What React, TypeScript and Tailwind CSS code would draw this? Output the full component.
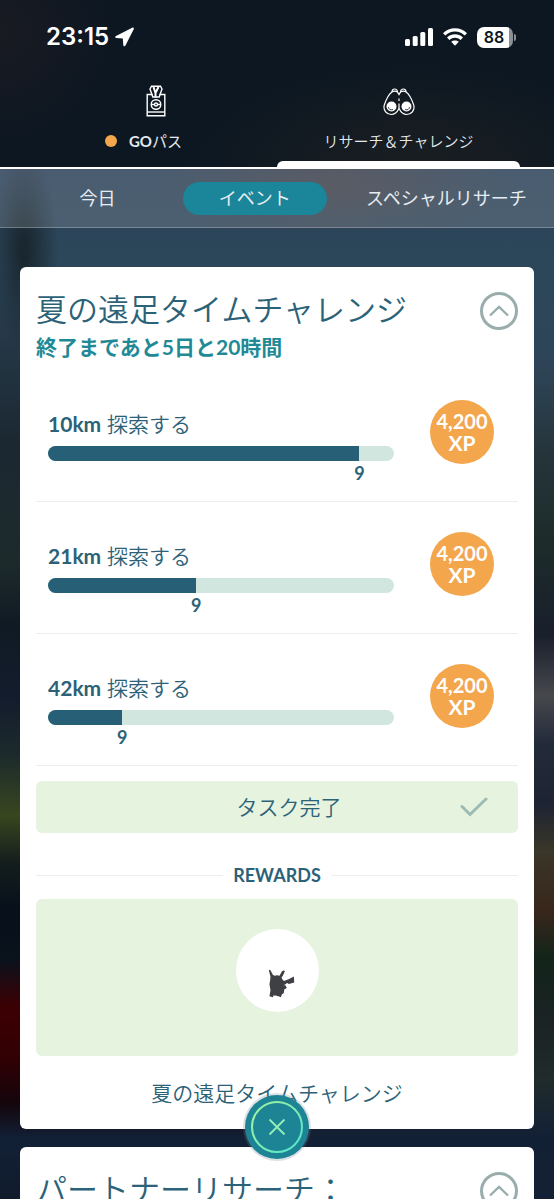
import React, { useState } from "react"

type TaskProps = {
     goal: number
     done: number
     xp: string
}

const tasks: Array<TaskProps> = [
     { goal: 10, done: 9, xp: "4,200" },
     { goal: 21, done: 9, xp: "4,200" },
     { goal: 42, done: 9, xp: "4,200" },
]

const StatusBar = () => (
     <div className="flex h-[74px] items-center justify-between pl-[46px] pr-[38px] text-white">
          <div className="flex items-center gap-1.5">
               <span className="font-['Inter',sans-serif] text-[24px] leading-7 font-semibold">23:15</span>
               <svg className="h-5 w-[19px]" viewBox="0 0 19 20" fill="currentColor" aria-hidden="true">
                    <path d="M17.2 0.8 1 8.9C-0.2 9.6 0 11 1.300 11.100L7.800 11.400 8.300 18C8.400 19.500 9.900 19.600 10.600 18.300L18.700 2.300C19.300 1 18.400 0.200 17.200 0.800Z" />
               </svg>
          </div>
          <div className="flex items-center gap-2.5">
               <svg className="h-[18px] w-7" viewBox="0 0 28 18" fill="currentColor" aria-hidden="true">
                    <rect x="0" y="11" width="5" height="7" rx="1.500" />
                    <rect x="7.700" y="8" width="5" height="10" rx="1.500" />
                    <rect x="15.300" y="4" width="5" height="14" rx="1.500" />
                    <rect x="23" y="0" width="5" height="18" rx="1.500" />
               </svg>
               <svg className="h-[18px] w-6" viewBox="0 0 24 18" aria-hidden="true">
                    <g fill="none" stroke="currentColor" strokeWidth="3.400">
                         <path d="M1.200 6.400C7.200 0.400 16.800 0.400 22.800 6.400" />
                         <path d="M5.200 10.800C9.100 7 14.900 7 18.800 10.800" />
                    </g>
                    <path fill="currentColor" d="M8.200 13.800C10.400 11.900 13.600 11.900 15.800 13.800L12 17.800Z" />
               </svg>
               <div className="flex items-center gap-px">
                    <span className="flex h-[21px] w-9 items-center justify-center rounded-[7px] bg-[linear-gradient(90deg,#fff_88%,#8b9096_88%)] pr-0.5 font-['Inter',sans-serif] text-[16px] font-semibold text-[#0c1722]">88</span>
                    <span className="h-[7px] w-0.5 rounded-r bg-[#8b9096]" />
               </div>
          </div>
     </div>
)

const PassIcon = () => (
     <svg className="h-8 w-5" viewBox="0 0 20 32" fill="none" stroke="#fff" strokeWidth="1.400" aria-hidden="true">
          <path d="M6.500 9.500H1.200V30.800H18.800V9.500H13.500" />
          <path d="M1.200 27H18.800" />
          <path d="M5.500 1.200H14.500L16 4 13.200 12H6.800L4 4Z" />
          <path d="M7.500 2 9.500 8 12.500 2M9.500 7.500V12.500" strokeWidth="2" />
          <circle cx="10" cy="19.500" r="4.800" />
          <circle cx="10" cy="19.500" r="1.500" />
          <path d="M5.200 19.500H8.500M11.500 19.500H14.800" />
     </svg>
)

const BinocularsIcon = () => (
     <svg className="h-8 w-8" viewBox="0 0 32 32" fill="none" stroke="#fff" strokeWidth="1.200" aria-hidden="true">
          <path d="M9 7C8.800 3 14.200 3 14.500 7L16 9.500 17.500 7C17.800 3 23.200 3 23 7" />
          <path d="M9 7C11 5.800 12.800 6 14.500 7M23 7C21 5.800 19.200 6 17.500 7" />
          <path d="M9 7C5 9.500 3 15 1.300 20C-0.200 25.500 4 29.500 8.200 29.500C12 29.500 14.500 26.500 16 23.500C17.500 26.500 20 29.500 23.800 29.500C28 29.500 32.200 25.500 30.700 20C29 15 27 9.500 23 7" />
          <path d="M16 13.500V16M16 18.500V23.500" />
          <circle cx="8.500" cy="21.500" r="5" fill="#fff" stroke="none" />
          <circle cx="23.500" cy="21.500" r="5" fill="#fff" stroke="none" />
          <path d="M5.500 22C5.500 24 7.500 25.500 10 24.500M26.500 22C26.500 24 24.500 25.500 22 24.500" stroke="#0c1722" strokeWidth="0.800" />
     </svg>
)

const Chevron = () => {
     return (
          <button type="button" aria-label="閉じる" className="mt-[5px] flex size-[38px] shrink-0 items-center justify-center rounded-full border-3 border-[#9aadad]">
               <svg className="h-3 w-5" viewBox="0 0 20 12" fill="none" stroke="#9aadad" strokeWidth="2.400" aria-hidden="true">
                    <path d="M1 10.500 10 2 19 10.500" />
               </svg>
          </button>
     )
}

const Task = ({ goal, done, xp }: TaskProps) => {
     const width = (done / goal) * 100 + "%"
     return (
          <li className="flex items-start gap-9 border-b border-[#e9eef0] pt-[30px] pr-6 pb-4 pl-3">
               <div className="mt-2.5 flex-1">
                    <p className="text-[21px] leading-7 font-[350]"><b className="font-bold">{goal}km</b> 探索する</p>
                    <div
                         role="progressbar"
                         aria-label={goal + "km 探索する"}
                         aria-valuenow={done}
                         aria-valuemax={goal}
                         className="mt-2 h-[15px] overflow-hidden rounded-full bg-[#d0e6de]"
                    >
                         <div className="h-full bg-[#265f76]" style={{ width }} />
                    </div>
                    <div className="flex justify-end" style={{ width }}>
                         <span className="flex w-0 justify-center text-[18px] leading-6 font-bold">{done}</span>
                    </div>
               </div>
               <div className="flex size-16 shrink-0 flex-col items-center justify-center rounded-full bg-[#f3a64c] font-bold text-white">
                    <span className="text-[20px] leading-[21px]">{xp}</span>
                    <span className="text-[21px] leading-[21px]">XP</span>
               </div>
          </li>
     )
}

const Silhouette = () => (
     <svg className="size-[83px] rounded-full bg-white" viewBox="50 57 248 248" role="img" aria-label="ポケモン">
          <path
               fill="#3f4043"
               d="M148 179 153 180 160 194 165 197 173 195 180 197 187 184 193 180 196 183 190 197 186 202 189 208 193 212 207 207 223 199 224 217 208 221 203 218 192 226 197 224 202 233 194 238 193 248 187 253 184 261 179 259 168 256 162 256 160 261 150 258 153 240 150 222 152 210 153 200 150 188Z"
          />
     </svg>
)

// blurred map seen behind the cards
const Backdrop = () => (
     <div className="absolute inset-0 -z-10 grid grid-cols-2" aria-hidden="true">
          <div className="bg-[radial-gradient(34px_100px_at_24px_250px,#1a2730_10%,transparent),linear-gradient(180deg,#2b4058_14%,#2c475a_22%,#263a49_27%,#1b2832_37%,#1d2a2b_47%,#101a24_52%,#131c2c_58%,#1c2a2c_63%,#38461f_68%,#141d1c_72%,#07101b_76%,#0a121c_80%,#3c0003_84%,#330003_88%,#14060c_92%,#122036_95%,#101b2c_100%)]" />
          <div className="bg-[linear-gradient(180deg,#2b4058_14%,#2c475a_22%,#2e4559_30%,#25343a_38%,#1d2c2a_45%,#191f2c_53%,#47484d_58%,#232a3a_62%,#1d2333_67%,#3a3628_71%,#38261b_76%,#12241a_80%,#1b2224_85%,#202b2b_90%,#122036_95%,#142036_100%)]" />
     </div>
)

const App = () => {
     const [page, setPage] = useState("イベント")
     const pages = ["今日", "イベント", "スペシャルリサーチ"]
     return (
          <div className="relative isolate flex h-screen flex-col overflow-hidden bg-[#122036] font-['Lato','Noto_Sans_CJK_JP',sans-serif] text-[#2c6278]">
               <Backdrop />
               <header className="border-b-2 border-white bg-[radial-gradient(240px_110px_at_75%_100%,#1a1e21,transparent),radial-gradient(120px_120px_at_0%_20%,#191a22,transparent)] bg-[#0c1722]">
                    <StatusBar />
                    <nav className="grid grid-cols-2 px-[34px] text-[15px] text-[#e3e9ee]">
                         <button type="button" className="flex h-[93px] flex-col items-center pt-[11px]">
                              <PassIcon />
                              <span className="relative mt-3 leading-6">
                                   <span className="absolute top-1.5 -left-6 size-3 rounded-full bg-[#f3a64c]" />
                                   <b>GO</b>パス
                              </span>
                         </button>
                         <button type="button" className="flex h-[93px] flex-col items-center pt-[11px] font-[350]">
                              <BinocularsIcon />
                              <span className="mt-3 leading-6">リサーチ＆チャレンジ</span>
                              <span className="mt-auto h-1.5 w-full rounded-t-md bg-white" />
                         </button>
                    </nav>
               </header>
               <nav className="grid h-[59px] shrink-0 grid-cols-[33%_26%_1fr] items-center border-b border-white/25 bg-[radial-gradient(180px_60px_at_60%_30%,rgba(110,90,85,0.45),transparent)] bg-white/15 text-[18px] text-[#e6edf2]">
                    {pages.map((item) => (
                         <button
                              key={item}
                              type="button"
                              onClick={() => setPage(item)}
                              className={item === page ? "h-[33px] rounded-full bg-[#1b8599]" : "h-[33px] pl-3"}
                         >
                              {item}
                         </button>
                    ))}
               </nav>
               <main className="mt-[39px] min-h-0 flex-1 overflow-hidden px-5">
                    <section className="rounded-md bg-white px-4 pt-5 pb-5">
                         <div className="flex items-start justify-between">
                              <h1 className="text-[31px] leading-[44px] font-[350]">夏の遠足タイムチャレンジ</h1>
                              <Chevron />
                         </div>
                         <p className="mb-[7px] text-[21px] leading-8 font-bold text-[#1f8a96]">終了まであと5日と20時間</p>
                         <ul>
                              {tasks.map((item) => (
                                   <Task key={item.goal} {...item} />
                              ))}
                         </ul>
                         <div className="mt-[15px] flex h-[52px] items-center justify-end rounded-md bg-[#e6f3df] pr-[30px]">
                              <span className="flex-1 pl-[82px] text-center text-[21px] leading-8 font-[350]">タスク完了</span>
                              <svg className="h-5 w-7" viewBox="0 0 28 20" fill="none" stroke="#9dbbb3" strokeWidth="3" strokeLinecap="round" aria-hidden="true">
                                   <path d="M2 9.500 10 17.500 26 2" />
                              </svg>
                         </div>
                         <div className="mt-[26px] flex items-center gap-2.5">
                              <span className="h-px flex-1 bg-[#e9eef0]" />
                              <h2 className="text-[18px] leading-8 font-bold">REWARDS</h2>
                              <span className="h-px flex-1 bg-[#e9eef0]" />
                         </div>
                         <div className="mt-2 flex h-[157px] justify-center rounded-md bg-[#e6f3df] pt-[30px]">
                              <Silhouette />
                         </div>
                         <p className="mt-[21px] text-center text-[21px] leading-8 font-[350]">夏の遠足タイムチャレンジ</p>
                    </section>
                    <section className="mt-[18px] rounded-md bg-white px-4 pt-5 pb-5">
                         <div className="flex items-start justify-between">
                              <h1 className="text-[31px] leading-[44px] font-[350]">パートナーリサーチ：</h1>
                              <Chevron />
                         </div>
                    </section>
               </main>
               <button
                    type="button"
                    aria-label="閉じる"
                    className="absolute bottom-10 left-1/2 -ml-8 flex size-16 items-center justify-center rounded-full bg-[#1d8496] shadow-[0_0_0_2px_rgba(120,130,140,0.25)]"
               >
                    <svg className="size-[54px]" viewBox="0 0 54 54" fill="none" strokeWidth="2" aria-hidden="true">
                         <defs>
                              <linearGradient id="ring" x1="0" y1="0" x2="1" y2="1">
                                   <stop offset="0" stopColor="#a5f39a" />
                                   <stop offset="1" stopColor="#52e3cf" />
                              </linearGradient>
                         </defs>
                         <circle cx="27" cy="27" r="25" stroke="url(#ring)" />
                         <path d="M19.500 19.500 34.500 34.500M34.500 19.500 19.500 34.500" stroke="#93efb4" strokeWidth="1.800" />
                    </svg>
               </button>
          </div>
     )
}

export default App
